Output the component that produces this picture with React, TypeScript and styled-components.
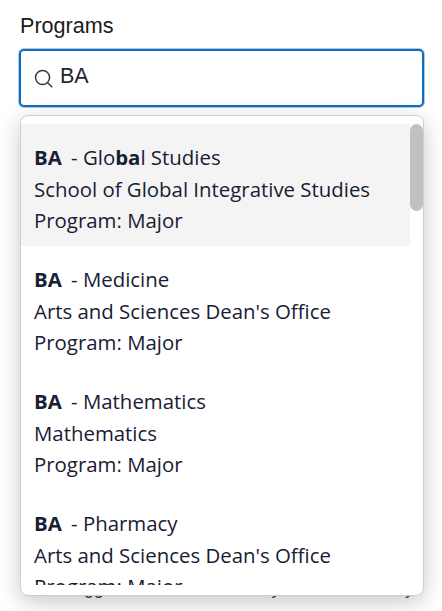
import React from "react";
import styled, { createGlobalStyle } from "styled-components";

const GlobalStyle = createGlobalStyle`
  html, body {
    margin: 0;
    padding: 0;
    background: #fff;
    overflow: hidden;
  }
`;

const Page = styled.div`
  width: 442px;
  height: 611px;
  padding: 14px 18px 0 19px;
  box-sizing: border-box;
  overflow: hidden;
  font-family: "Liberation Sans", Arial, sans-serif;
  color: #1b1b1b;
`;

const Label = styled.label`
  display: block;
  font-size: 21.6px;
  line-height: 23px;
  margin: 0 0 12px 1px;
`;

const Field = styled.div`
  position: relative;
`;

const SearchBox = styled.div`
  display: flex;
  align-items: center;
  gap: 7px;
  height: 58px;
  box-sizing: border-box;
  padding: 0 13px 4px 13px;
  background: #fff;
  border: 2px solid #0f6cbd;
  border-radius: 5px;
  box-shadow: 0 0 0 1px #a9cde9;
  font-size: 21.5px;
  color: #1f2430;
`;

const SearchIcon = styled.svg`
  width: 19px;
  height: 19px;
  margin-top: 5px;
  flex: none;
`;

const Dropdown = styled.div`
  position: absolute;
  top: 66px;
  left: 1px;
  right: 0;
  height: 481px;
  box-sizing: border-box;
  background: #fff;
  border: 1px solid #cfcfcf;
  border-radius: 8px;
  box-shadow: 0 6px 22px rgba(0, 0, 0, 0.22);
  padding: 8px 0 10px;
  z-index: 2;
`;

const Scroller = styled.div`
  position: relative;
  height: 100%;
  overflow: hidden;
`;

const Options = styled.ul`
  list-style: none;
  margin: 0;
  padding: 0;
  width: 389px;
`;

const Option = styled.li<{ $active?: boolean }>`
  padding: 18px 13px 9.5px;
  background: ${(props) => (props.$active ? "#f4f4f4" : "transparent")};
  font-family: "Open Sans", "Noto Sans", sans-serif;
  font-size: 20.4px;
  line-height: 31.5px;
  color: #172033;
  white-space: nowrap;
`;

const Line = styled.div``;

const Prefix = styled.b`
  margin-right: 4px;
`;

const Thumb = styled.div`
  position: absolute;
  top: 0;
  right: 0;
  width: 13px;
  height: 87px;
  border-radius: 7px;
  background: #c1c1c1;
`;

const Hint = styled.p`
  margin: 470px 0 0 43px;
  font-size: 17.8px;
  line-height: 22px;
  color: #444;
  white-space: nowrap;
`;

const programs = [
  { name: <><Prefix>BA</Prefix> - Glo<b>ba</b>l Studies</>, school: "School of Global Integrative Studies" },
  { name: <><Prefix>BA</Prefix> - Medicine</>, school: "Arts and Sciences Dean's Office" },
  { name: <><Prefix>BA</Prefix> - Mathematics</>, school: "Mathematics" },
  { name: <><Prefix>BA</Prefix> - Pharmacy</>, school: "Arts and Sciences Dean's Office" },
];

export default function App() {
  return (
    <Page>
      <GlobalStyle />
      <Label>Programs</Label>
      <Field>
        <SearchBox>
          <SearchIcon viewBox="0 0 20 20" fill="none" stroke="#3c3c3c" strokeWidth="1.6" strokeLinecap="round">
            <circle cx="9" cy="9" r="7.4" />
            <path d="M14.4 14.4l4.3 4.3" />
          </SearchIcon>
          BA
        </SearchBox>
        <Dropdown>
          <Scroller>
            <Options>
              {programs.map((p, i) => (
                <Option key={i} $active={i === 0}>
                  <Line>{p.name}</Line>
                  <Line>{p.school}</Line>
                  <Line>Program: Major</Line>
                </Option>
              ))}
            </Options>
            <Thumb />
          </Scroller>
        </Dropdown>
        <Hint>Suggestions are limited to your recent library</Hint>
      </Field>
    </Page>
  );
}
